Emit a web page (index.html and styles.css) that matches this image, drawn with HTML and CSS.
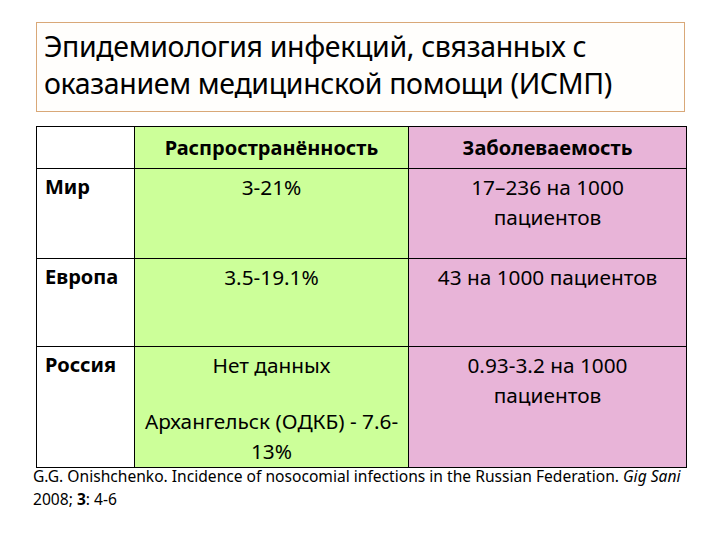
FILE: index.html
```html
<!DOCTYPE html>
<html lang="ru">
<head>
<meta charset="utf-8">
<link rel="stylesheet" href="styles.css">
</head>
<body>
<div class="page">
  <div class="title-box">
    <h1 class="title">Эпидемиология инфекций, связанных с оказанием медицинской помощи (ИСМП)</h1>
  </div>
  <table class="data">
    <colgroup>
      <col class="c1"><col class="c2"><col class="c3">
    </colgroup>
    <tr class="r-head">
      <th class="blank"></th>
      <th class="green">Распространённость</th>
      <th class="pink">Заболеваемость</th>
    </tr>
    <tr class="r1">
      <th class="rowname">Мир</th>
      <td class="green">3-21%</td>
      <td class="pink">17–236 на 1000<br>пациентов</td>
    </tr>
    <tr class="r2">
      <th class="rowname">Европа</th>
      <td class="green">3.5-19.1%</td>
      <td class="pink">43 на 1000 пациентов</td>
    </tr>
    <tr class="r3">
      <th class="rowname">Россия</th>
      <td class="green"><p class="para">Нет данных</p><p class="para second">Архангельск (ОДКБ) - 7.6-<br>13%</p></td>
      <td class="pink">0.93-3.2 на 1000<br>пациентов</td>
    </tr>
  </table>
  <p class="source">G.G. Onishchenko. Incidence of nosocomial infections in the Russian Federation. <i>Gig Sani</i><br>2008; <b>3</b>: 4-6</p>
</div>
</body>
</html>
```
FILE: styles.css
```css
html, body {
  margin: 0;
  padding: 0;
  background: #ffffff;
}
body {
  font-family: "Noto Sans", "Open Sans", sans-serif;
  color: #000;
}
.page {
  width: 720px;
  height: 540px;
  padding: 22px 0 0 36px;
  box-sizing: border-box;
}
.title-box {
  width: 649px;
  height: 90px;
  box-sizing: border-box;
  border: 1.5px solid #d9a878;
  padding: 5px 0 0 7px;
  background: #fffefc;
}
.title {
  margin: 0;
  font-weight: 400;
  font-size: 28.5px;
  line-height: 37px;
  letter-spacing: -0.35px;
}
.data {
  margin-top: 14px;
  border-collapse: collapse;
  table-layout: fixed;
  width: 650px;
  font-size: 20.8px;
}
.c1 { width: 98px; }
.c2 { width: 274px; }
.c3 { width: 278px; }
.data th, .data td {
  border: 1.5px solid #000;
  padding: 3px 2px 0;
  vertical-align: top;
  text-align: center;
  line-height: 30px;
  font-weight: 400;
}
.data .rowname {
  text-align: left;
  font-weight: 700;
  font-size: 20px;
  padding-left: 8px;
}
.r-head th {
  font-weight: 700;
  font-size: 20px;
  vertical-align: middle;
  padding: 0 2px;
}
.r-head { height: 42px; }
.r1 { height: 90px; }
.r2 { height: 88px; }
.r3 { height: 121px; }
.blank { background: #fff; }
.green { background: #ccff99; }
.pink { background: #e8b4d8; }
.para { margin: 0; }
.para.second { margin-top: 26px; }
.source {
  margin: -3px 0 0 -3px;
  font-size: 15.6px;
  line-height: 23px;
  white-space: nowrap;
}
```
